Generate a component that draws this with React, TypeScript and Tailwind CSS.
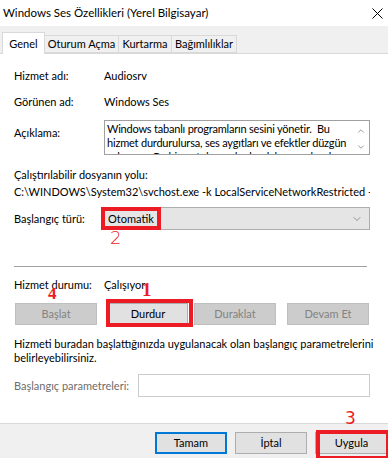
import { ChevronDown, ChevronUp } from "lucide-react"

const font = { fontFamily: 'Lato, "Liberation Sans", sans-serif' }

const descLines = [
  "Windows tabanlı programların sesini yönetir.  Bu",
  "hizmet durdurulursa, ses aygıtları ve efektler düzgün",
  "çalışmaz.  Bu hizmet devre dışı bırakılırsa, açıkça bu",
]

function Btn({ label, disabled, className = "" }: { label: string; disabled?: boolean; className?: string }) {
  return (
    <div
      className={
        "flex h-[22px] items-center justify-center border " +
        (disabled ? "border-[#bfbfbf] bg-[#cccccc] text-[#838383]" : "border-[#adadad] bg-[#e1e1e1] text-black") +
        " " +
        className
      }
    >
      {label}
    </div>
  )
}

export default function App() {
  return (
    <div className="relative h-[458px] w-[388px] overflow-hidden whitespace-nowrap bg-[#f0f0f0] text-[11px] leading-[16px] text-black" style={font}>
      {/* title bar */}
      <div className="flex h-[26px] items-center justify-between bg-white pl-[3px] pr-[3px]">
        <span className="text-[11.5px]">Windows Ses Özellikleri (Yerel Bilgisayar)</span>
        <svg width="11" height="11" viewBox="0 0 11 11" className="mr-[2px]">
          <path d="M0.5 0.5 L10.5 10.5 M10.5 0.5 L0.5 10.5" stroke="#000" strokeWidth="1" />
        </svg>
      </div>

      {/* tabs */}
      <div className="mt-[6px] flex items-end pl-[2px]">
        <div className="relative z-10 -mb-px flex h-[22px] w-[43px] items-center justify-center border border-b-0 border-[#d9d9d9] bg-white">
          Genel
        </div>
        <div className="flex h-[18px] w-[74px] items-center justify-center border border-l-0 border-[#d9d9d9] bg-[#f0f0f0]">
          Oturum Açma
        </div>
        <div className="flex h-[18px] w-[53px] items-center justify-center border border-l-0 border-[#d9d9d9] bg-[#f0f0f0]">
          Kurtarma
        </div>
        <div className="flex h-[18px] w-[65px] items-center justify-center border border-l-0 border-[#d9d9d9] bg-[#f0f0f0]">
          Bağımlılıklar
        </div>
      </div>

      {/* panel */}
      <div className="flex h-[371px] flex-col border-y border-[#d9d9d9] bg-white pl-[14px]">
        <div className="mt-[14px] flex h-[16px]">
          <span className="w-[90px]">Hizmet adı:</span>
          <span>Audiosrv</span>
        </div>
        <div className="mt-[10px] flex h-[16px]">
          <span className="w-[90px]">Görünen ad:</span>
          <span>Windows Ses</span>
        </div>
        <div className="mt-[10px] flex">
          <span className="mt-[5px] w-[90px]">Açıklama:</span>
          <div className="flex h-[35px] w-[266px] overflow-hidden border border-[#a0a0a0]">
            <div className="min-w-0 flex-1 overflow-hidden whitespace-pre pl-[2px] pt-[1px] leading-[14px] tracking-[-0.2px]">
              {descLines.map((line) => (
                <div key={line}>{line}</div>
              ))}
            </div>
            <div className="flex w-[16px] shrink-0 flex-col items-center pt-[5px] text-[#606060]">
              <ChevronUp size={10} strokeWidth={1.5} />
              <ChevronDown size={10} strokeWidth={1.5} className="mt-[6px]" />
            </div>
          </div>
        </div>
        <div className="mt-[12px] h-[16px]">Çalıştırılabilir dosyanın yolu:</div>
        <div className="mt-[1px] h-[16px] w-[356px] overflow-hidden">
          C:\WINDOWS\System32\svchost.exe -k LocalServiceNetworkRestricted -p
        </div>
        <div className="mt-[7px] flex items-center">
          <span className="w-[87px]">Başlangıç türü:</span>
          <div className="flex h-[23px] w-[269px] items-center justify-between border border-[#adadad] bg-[#e5e5e5] pl-[6px] pr-[6px]">
            <span>Otomatik</span>
            <ChevronDown size={12} strokeWidth={1.2} className="text-[#555]" />
          </div>
        </div>
        <div className="mt-[36px] h-px w-[353px] bg-[#a0a0a0]" />
        <div className="mt-[10px] flex h-[16px]">
          <span className="w-[90px]">Hizmet durumu:</span>
          <span>Çalışıyor</span>
        </div>
        <div className="mt-[10px] flex">
          <Btn label="Başlat" disabled className="ml-px w-[82px]" />
          <Btn label="Durdur" className="ml-[11px] w-[80px]" />
          <Btn label="Duraklat" disabled className="ml-[6px] w-[82px]" />
          <Btn label="Devam Et" disabled className="ml-[11px] w-[82px]" />
        </div>
        <div className="mt-[12px] w-[360px] whitespace-normal leading-[14px]">
          Hizmeti buradan başlattığınızda uygulanacak olan başlangıç parametrelerini belirleyebilirsiniz.
        </div>
        <div className="mt-[9px] flex items-center">
          <span className="w-[124px] text-[#6d6d6d]">Başlangıç parametreleri:</span>
          <div className="h-[23px] w-[232px] border border-[#cccccc] bg-white" />
        </div>
      </div>

      {/* bottom buttons */}
      <div className="mt-[8px] flex pl-[155px]">
        <Btn label="Tamam" className="w-[73px] border-2 !border-[#0078d7]" />
        <Btn label="İptal" className="ml-[8px] w-[73px]" />
        <Btn label="Uygula" className="ml-[8px] w-[73px] shrink-0" />
      </div>

      {/* annotations */}
      <div className="absolute left-[101px] top-[207px] h-[23px] w-[60px] border-[4px] border-[#ed1c24]" />
      <span className="absolute left-[110px] top-[229px] text-[18px] font-light leading-[18px] text-[#ed1c24]" style={{ fontFamily: '"DejaVu Sans", sans-serif' }}>2</span>
      <div className="absolute left-[106px] top-[299px] h-[28px] w-[87px] border-[4px] border-[#ed1c24]" />
      <span className="absolute left-[142px] top-[281px] text-[19px] font-bold leading-[18px] text-[#ed1c24]" style={{ fontFamily: '"Liberation Serif", serif' }}>1</span>
      <span className="absolute left-[48px] top-[285px] text-[17px] font-bold leading-[17px] text-[#ed1c24]" style={{ fontFamily: '"Liberation Serif", serif' }}>4</span>
      <div className="absolute left-[316px] top-[430px] h-[30px] w-[74px] border-[4px] border-[#ed1c24]" />
      <span className="absolute left-[345px] top-[410px] text-[17px] leading-[17px] text-[#ed1c24]" style={{ fontFamily: '"DejaVu Sans", sans-serif' }}>3</span>
    </div>
  )
}
